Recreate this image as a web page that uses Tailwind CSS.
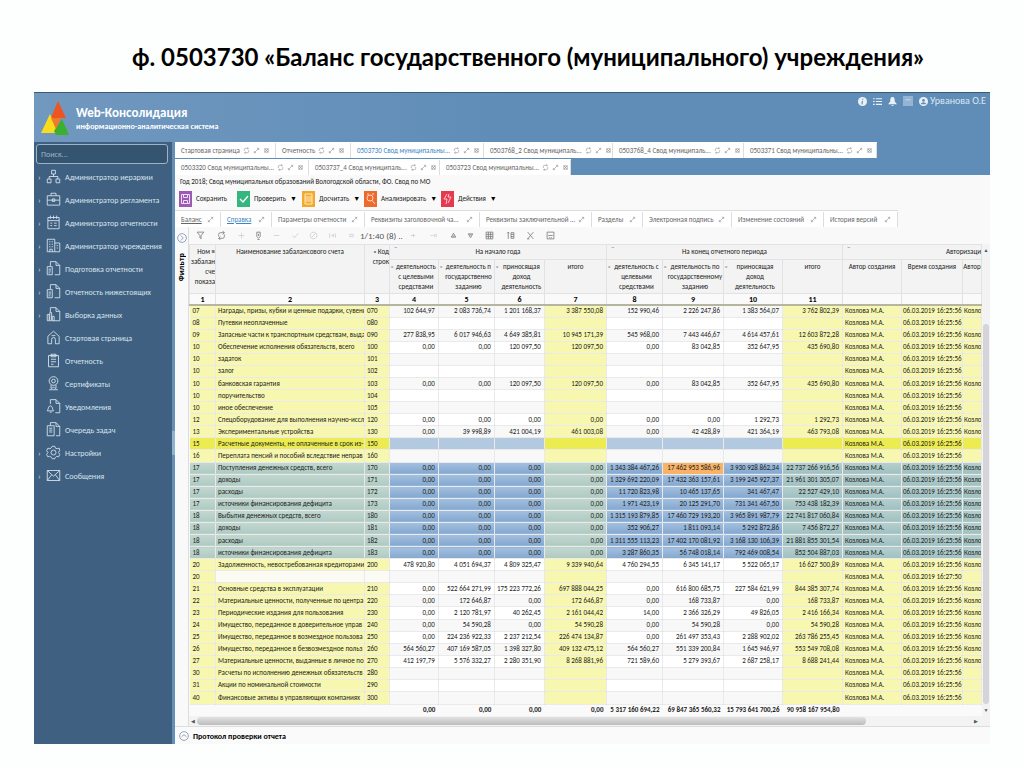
<!DOCTYPE html>
<html lang="ru">
<head>
<meta charset="utf-8">
<title>Web-Консолидация</title>
<script src="https://cdn.jsdelivr.net/npm/@tailwindcss/browser@4"></script>
</head>
<body class="min-h-screen bg-[#fdfefe] font-['Carlito','Calibri','Lato',sans-serif] text-[7px] leading-[10px] text-[#333]">
<svg class="hidden" aria-hidden="true">
  <defs>
    <g id="i-refresh" fill="none" stroke="currentColor" stroke-width="1.3"><path d="M3 9V6a3 3 0 0 1 3-3h6M13 7v3a3 3 0 0 1-3 3H4M10 1l2.500 2L10 5M6 11l-2.500 2L6 15"/></g>
    <g id="i-expand" fill="none" stroke="currentColor" stroke-width="1.3"><path d="M3 13L13 3M9 3h4v4M3 9v4h4"/></g>
    <g id="i-close" fill="none" stroke="currentColor" stroke-width="1.300"><path d="M4 4h8v8H4zM4 4l8 8M12 4l-8 8"/></g>
    <g id="s-tree"><path d="M9 2h6v6H9zM2 16h6v6H2zM16 16h6v6h-6zM12 8v4M5 16v-4h14v4"/></g>
    <g id="s-case"><path d="M2 6h20v15H2zM8 6V2h8v4M2 13h20M10 11h4v4h-4z"/></g>
    <g id="s-cal"><path d="M3 4h18v18H3zM3 9h18M7 1v5M12 1v5M17 1v5M7 13h3M13 13h4M7 17h3M13 17h4"/></g>
    <g id="s-build"><path d="M2 2h12v20H2zM14 8h8v14h-8M5 6h2M9 6h2M5 10h2M9 10h2M5 14h2M9 14h2M6 22v-4h4v4M17 12h2M17 16h2"/></g>
    <g id="s-doc"><path d="M7 8V1h9l6 6v15h-8M16 1v6h6M2 9h8v13H2zM4 13h4M4 16h4M4 19h3"/></g>
    <g id="s-chart"><path d="M7 8V1h9l6 6v15H12M16 1v6h6M2 22V12h3v10zM6 22V9h3v13zM10 22v-7h3v7z"/></g>
    <g id="s-home"><path d="M3 10l9-8 9 8v12h-6v-7a3 3 0 0 0-6 0v7H3zM9 9h6"/></g>
    <g id="s-clip"><path d="M4 4h16v18H4zM8 2h8v4H8zM8 10h8M8 14h8M8 18h4"/></g>
    <g id="s-cert"><circle cx="12" cy="8" r="7"/><circle cx="12" cy="8" r="3"/><path d="M8 14v6l4-2 4 2v-6M5 22h14"/></g>
    <g id="s-bell"><path d="M7 8V1h9l6 6v15h-7M16 1v6h6M2 19c2-2 1-8 5-8s3 6 5 8zM6 21h3"/></g>
    <g id="s-queue"><path d="M7 6V1h9l6 6v15h-6M16 1v6h6M2 6h11v16H2zM5 10h5M5 13h5M5 16h5"/></g>
    <g id="s-gear"><circle cx="12" cy="12" r="4"/><path d="M10 2h4l1 3 3 1 3-1 1 4-2 3 2 3-2 4-3-1-2 2-1 2h-4l-1-2-3-2-3 1-2-4 2-3-2-3 2-4 3 1 2-1z"/></g>
    <g id="s-mail"><path d="M2 4h20v16H2zM2 4l10 9 10-9M2 20l7-9M22 20l-7-9"/></g>
  </defs>
</svg>

<header class="flex h-[92px] items-center justify-center pt-[22px] pl-8">
  <h1 class="font-['Lato','Carlito',sans-serif] text-[24px] leading-[30px] font-bold whitespace-nowrap text-black">ф. 0503730 «Баланс государственного (муниципального) учреждения»</h1>
</header>

<main class="mx-[34px] border-t border-[#3a5a78] bg-[#5f8db7]">
  <div class="flex h-[49px] items-start justify-between bg-linear-to-r from-[#7198bf] via-[#5f8db7] to-[#5f8db7]">
    <div class="flex items-center gap-1 pt-2 pl-1.5 text-white">
      <svg class="h-9 w-8" viewBox="0 0 32 36" aria-hidden="true"><path d="M18 0L11 17h15z" fill="#ee5421"/><path d="M10 13L1 32h17z" fill="#fbdc1c"/><path d="M22 18l-8 12 2 4h13z" fill="#3bb02e"/><path d="M11 17h10l-5 11z" fill="#ee7a2a"/></svg>
      <div>
        <div class="text-[13px] leading-[14px] font-bold">Web-Консолидация</div>
        <div class="text-[8px] leading-3 font-bold">информационно-аналитическая система</div>
      </div>
    </div>
    <div class="flex items-center gap-1.5 pt-0.5 pr-1 text-[#e8f1f8]">
      <svg class="size-[9px]" viewBox="0 0 16 16"><circle cx="8" cy="8" r="8" fill="currentColor"/><path d="M8.500 3v2M8 7l-1 6" stroke="#5f8db7" stroke-width="2"/></svg>
      <svg class="size-[9px]" viewBox="0 0 16 16" stroke="currentColor" stroke-width="2"><path d="M0 3h3M5 3h11M0 8h3M5 8h11M0 13h3M5 13h11"/></svg>
      <svg class="size-[9px]" viewBox="0 0 16 16" fill="currentColor"><path d="M8 0c4 0 4 5 4 8l4 5H0l4-5c0-3 0-8 4-8zM5 14h6l-3 2z"/></svg>
      <svg class="size-[10px]" viewBox="0 0 16 16"><path d="M0 0h16v16H0z" fill="#93b5d3"/><path d="M4 6h8" stroke="#b9d0e4" stroke-width="2"/></svg>
      <div class="flex items-center gap-0.5">
        <svg class="size-[9px]" viewBox="0 0 16 16"><circle cx="8" cy="8" r="8" fill="currentColor"/><circle cx="8" cy="6" r="2.500" fill="#5f8db7"/><path d="M3 13c1-5 9-5 10 0z" fill="#5f8db7"/></svg>
        <a href="#" class="text-[10px] leading-3 text-[#dbe8f3]">Урванова О.Е</a>
      </div>
    </div>
  </div>

  <div class="flex">
    <nav class="w-[138px] shrink-0 bg-[#3f6080] px-0.5 pt-0.5 text-[#d8e4ee]">
      <input type="text" aria-label="Поиск" placeholder="Поиск..." class="mb-px block h-5 w-[132px] rounded-[3px] border border-[#9db4c8] bg-[#34546f] px-1 text-[8px] text-white placeholder:text-[#9db4c8]">
      <ul id="menu"></ul>
    </nav>
    <div class="flex w-[3px] shrink-0 items-center bg-[#6490b8]"><span class="h-6 w-full bg-[#8eb2d2]"></span></div>

    <div class="min-w-0 flex-1">
      <div id="tabs1" class="mb-px flex h-4 w-fit bg-white pt-px"></div>
      <div id="tabs2" class="flex h-4 w-fit bg-white pt-px"></div>

      <div class="bg-[#f9f9f9]">
        <p class="h-[13px] pt-0.5 pl-[5px] text-[#222]">Год 2018; Свод муниципальных образований Вологодской области, ФО. Свод по МО</p>
        <div class="flex h-[22px] items-center pl-1 text-[#222]">
          <button class="flex w-[58px] items-center gap-1"><svg class="h-4 w-[13px] shrink-0" viewBox="0 0 13 16"><path d="M0 0h13v16H0z" fill="#9b5bb5"/><path d="M2.500 3.500h8v9h-8zM4.500 3.500v3h4v-3M4.500 12.500v-3h4v3" fill="none" stroke="#efdcf7"/></svg>Сохранить</button>
          <button class="flex w-[65px] items-center gap-1"><svg class="h-4 w-[13px] shrink-0" viewBox="0 0 13 16"><path d="M0 0h13v16H0z" fill="#35b67f"/><path d="M3 8l3 3 5-6" fill="none" stroke="#fff" stroke-width="1.300"/></svg>Проверить <span class="ml-auto pr-2.5 text-black">▼</span></button>
          <button class="flex w-[62px] items-center gap-1"><svg class="h-4 w-[13px] shrink-0" viewBox="0 0 13 16"><path d="M0 0h13v16H0z" fill="#f2a92c"/><path d="M3 3h7v10H3zM3 6h7M3 8h7M3 10h7" fill="none" stroke="#ffe9bd"/></svg>Досчитать <span class="ml-auto pr-2 text-black">▼</span></button>
          <button class="flex w-[77px] items-center gap-1"><svg class="h-4 w-[13px] shrink-0" viewBox="0 0 13 16"><path d="M0 0h13v16H0z" fill="#ee6a2c"/><circle cx="6" cy="7" r="3" fill="none" stroke="#ffd9c4"/><path d="M8 9.500l3 3.500M3 3h2M8 3h2" stroke="#ffd9c4"/></svg>Анализировать <span class="ml-auto pr-2.5 text-black">▼</span></button>
          <button class="flex w-[62px] items-center gap-1"><svg class="h-4 w-[13px] shrink-0" viewBox="0 0 13 16"><path d="M0 0h13v16H0z" fill="#e53950"/><path d="M6 3L3 8h3l-1 5M7 12l3-6H7l1-3" fill="none" stroke="#ffc5cc"/></svg>Действия <span class="ml-auto pr-2.5 text-black">▼</span></button>
        </div>
        <div id="sheets" class="flex h-[17px] w-fit border-t border-[#ddd] bg-white pt-px text-[#666]"></div>

        <div class="flex">
          <aside class="flex w-[14px] shrink-0 flex-col items-center border-r border-[#ddd] pt-1.5">
            <button aria-label="Развернуть фильтр"><svg class="size-[10px]" viewBox="0 0 16 16" fill="none" stroke="#7d93b0" stroke-width="1.300"><circle cx="8" cy="8" r="7"/><path d="M6 4l4 4-4 4"/></svg></button>
            <span class="mt-2.5 rotate-180 font-['Open_Sans',sans-serif] text-[7px] font-bold text-black [writing-mode:vertical-rl]">Фильтр</span>
          </aside>
          <div class="min-w-0 flex-1">
            <div class="flex h-[17px] items-center pl-0.5 text-[#777]" id="tools"></div>
            <div class="flex">
              <div class="min-w-0 flex-1 overflow-hidden">
              <table class="h-[472px] w-full table-fixed border-collapse">
                <colgroup><col class="w-[26px]"><col><col class="w-[25px]"><col class="w-[49px]"><col class="w-[56px]"><col class="w-[50px]"><col class="w-[62px]"><col class="w-[56px]"><col class="w-[61px]"><col class="w-[59px]"><col class="w-[60px]"><col class="w-[59px]"><col class="w-[61px]"><col class="w-[19px]"></colgroup>
                <thead class="bg-[#f3f3f3] text-[#222]">
                  <tr class="h-[15px]">
                    <th rowspan="2" class="overflow-hidden border border-[#e2e2e2] pt-0.5 text-right align-top font-normal whitespace-nowrap">Ном ≡<br>забалан<br>сче<br>показа</th>
                    <th rowspan="2" class="border border-[#e2e2e2] pt-0.5 align-top font-normal">Наименование забалансового счета</th>
                    <th rowspan="2" class="border border-[#e2e2e2] pt-0.5 text-right align-top font-normal whitespace-nowrap">▫ Код<br>строк</th>
                    <th colspan="4" class="relative border border-[#e2e2e2] font-normal before:absolute before:-top-0.5 before:left-1 before:text-[#888] before:content-['–']">На начало года</th>
                    <th colspan="4" class="relative border border-[#e2e2e2] font-normal before:absolute before:-top-0.5 before:left-1 before:text-[#888] before:content-['–']">На конец отчетного периода</th>
                    <th colspan="3" class="relative border border-[#e2e2e2] text-right font-normal before:absolute before:-top-0.5 before:left-1 before:text-[#888] before:content-['–']">Авторизаци</th>
                  </tr>
                  <tr class="h-[34px] align-top whitespace-nowrap">
                    <th class="relative overflow-hidden border border-[#e2e2e2] pt-0.5 pl-1 font-normal before:absolute before:left-px before:text-[#888] before:content-['▫']">деятельность<br>с целевыми<br>средствами</th>
                    <th class="relative overflow-hidden border border-[#e2e2e2] pt-0.5 pl-1 font-normal before:absolute before:left-px before:text-[#888] before:content-['▫']">деятельность п<br>государственно<br>заданию</th>
                    <th class="relative overflow-hidden border border-[#e2e2e2] pt-0.5 pl-1 font-normal before:absolute before:left-px before:text-[#888] before:content-['▫']">приносящая<br>доход<br>деятельность</th>
                    <th class="border border-[#e2e2e2] pt-0.5 font-normal">итого</th>
                    <th class="relative overflow-hidden border border-[#e2e2e2] pt-0.5 pl-1 font-normal before:absolute before:left-px before:text-[#888] before:content-['▫']">деятельность с<br>целевыми<br>средствами</th>
                    <th class="relative overflow-hidden border border-[#e2e2e2] pt-0.5 pl-1 font-normal before:absolute before:left-px before:text-[#888] before:content-['▫']">деятельность по<br>государственному<br>заданию</th>
                    <th class="relative overflow-hidden border border-[#e2e2e2] pt-0.5 pl-1 font-normal before:absolute before:left-px before:text-[#888] before:content-['▫']">приносящая<br>доход<br>деятельность</th>
                    <th class="border border-[#e2e2e2] pt-0.5 font-normal">итого</th>
                    <th class="border border-[#e2e2e2] pt-0.5 font-normal">Автор создания</th>
                    <th class="border border-[#e2e2e2] pt-0.5 font-normal">Время создания</th>
                    <th class="overflow-hidden border border-[#e2e2e2] pt-0.5 font-normal">Автор</th>
                  </tr>
                  <tr class="h-[11px] border-b-2 border-b-[#b5b5a0] text-black" id="nums"></tr>
                </thead>
                <tbody id="rows" class="text-[#222]"></tbody>
                <tfoot><tr class="h-3 border-t border-[#aaa] bg-[#fafafa] text-right text-[#222]" id="total"></tr></tfoot>
              </table>
              </div>
              <div class="flex w-2 shrink-0 flex-col items-center justify-between bg-[#f3f3f3] text-[5px] leading-3 text-[#555]">
                <span>▲</span>
                <span class="mt-[68px] w-1.5 flex-1 rounded-sm bg-[#d5d5d9]"></span>
                <span>▼</span>
              </div>
            </div>
            <div class="flex h-[10px] items-center bg-[#f3f3f3] pr-3 text-[5px] text-[#555]">
              <span class="w-2 text-center">◀</span>
              <span class="h-2 w-[669px] rounded-sm bg-linear-to-b from-[#e2e2e2] to-[#bcbcbc]"></span>
              <span class="ml-auto">▶</span>
            </div>
          </div>
        </div>
        <div class="flex h-[18px] items-center gap-1 border-t border-[#ddd] bg-[#fafafa] pl-1 text-black">
          <button aria-label="Развернуть протокол"><svg class="block size-[10px]" viewBox="0 0 16 16" fill="none" stroke="#7d93b0" stroke-width="1.300"><circle cx="8" cy="8" r="7"/><path d="M4 9l4-3 4 3"/></svg></button>
          <span class="text-[8px] font-bold">Протокол проверки отчета</span>
        </div>
      </div>
    </div>
  </div>
</main>

<script>
const el = id => document.getElementById(id);

el('menu').innerHTML = [
  ['tree','Администратор иерархии',1],['case','Администратор регламента',1],['cal','Администратор отчетности',1],
  ['build','Администратор учреждения',1],['doc','Подготовка отчетности',1],['doc','Отчетность нижестоящих',1],
  ['chart','Выборка данных',1],['home','Стартовая страница',0],['clip','Отчетность',0],['cert','Сертификаты',0],
  ['bell','Уведомления',0],['queue','Очередь задач',0],['gear','Настройки',1],['mail','Сообщения',1]
].map(([i,t,a]) => `<li><a href="#" class="flex h-[23px] items-center text-[8px] whitespace-nowrap"><span class="w-[10px] shrink-0 pl-0.5">${a ? '›' : ''}</span><svg class="mr-1 size-[15px] shrink-0" viewBox="0 0 24 24" fill="none" stroke="currentColor" stroke-width="1.4"><use href="#s-${i}"/></svg>${t}</a></li>`).join('');

const ico = n => `<svg class="size-[7px] shrink-0 text-[#888]" viewBox="0 0 16 16"><use href="#i-${n}"/></svg>`;
const tab = ([t,w,c]) => `<div class="flex items-center gap-[3px] border-r border-[#ddd] pr-2 pl-1.5 whitespace-nowrap ${c || 'text-[#666]'}" style="width:${w}px"><a href="#" class="mr-auto">${t}</a>${ico('refresh')}${ico('expand')}${ico('close')}</div>`;
el('tabs1').innerHTML = [['Стартовая страница',101],['Отчетность',75],['0503730 Свод муниципальны...',133,'text-[#3b86c4]'],['0503768_2 Свод муниципаль...',129],['0503768_4 Свод муниципаль...',131],['0503371 Свод муниципальны...',133]].map(tab).join('');
el('tabs2').innerHTML = [['0503320 Свод муниципальны...',134],['0503737_4 Свод муниципаль...',131],['0503723 Свод муниципальны...',131]].map(tab).join('');
el('sheets').innerHTML = [['Баланс',46,'underline'],['Справка',51,'text-[#3b86c4] underline'],['Параметры отчетности',93,''],['Реквизиты заголовочной ча...',115,''],['Реквизиты заключительной ...',112,''],['Разделы',51,''],['Электронная подпись',89,''],['Изменение состояний',92,''],['История версий',74,'']]
  .map(([t,w,c]) => `<div class="flex items-center border-r border-[#ddd] px-1.5 whitespace-nowrap" style="width:${w}px"><a href="#" class="mr-auto ${c}">${t}</a>${ico('expand')}</div>`).join('');

const T = (w, d, c) => `<button class="flex h-3 shrink-0 items-center justify-center ${c || ''}" aria-label="Действие" style="width:${w}px"><svg class="size-[9px]" viewBox="0 0 16 16" fill="none" stroke="currentColor" stroke-width="1.4"><path d="${d}"/></svg></button>`;
const dim = 'text-[#ccc]';
el('tools').innerHTML =
  T(18,'M2 2h12L9 8v6l-2-2V8z') + T(24,'M3 10V6a3 3 0 0 1 3-3h7M13 6v4a3 3 0 0 1-3 3H3M10 0l3 3-3 3M6 10l-3 3 3 3') + T(17,'M8 3v10M3 8h10',dim) +
  T(16,'M5 2h6v8l-3 3-3-3zM8 5v4M6 15h4') + T(20,'M3 8h10',dim) + T(18,'M3 8l3 4 7-8',dim) + T(18,'M8 2a6 6 0 1 0 .1 0M4 12l8-8',dim) +
  T(20,'M3 4v8M13 4v8M6 8h5M9 5v6',dim) + T(18,'M5 6h6v4H5z',dim) +
  `<span class="w-[44px] shrink-0 text-[9px] whitespace-nowrap text-[#555]">1/1:40 (8) ..</span>` +
  T(18,'M3 8h8M8 5v6',dim) + T(22,'M3 8h5M10 5v6M13 5v6',dim) + T(18,'M4 11h8L8 4zM6 9h4') + T(16,'M4 5h8L8 12zM6 7h4') +
  T(22,'M2 2h12v12H2zM2 6h12M2 10h12M6 2v12M10 2v12') + T(20,'M4 14V2M2 4l2-2 2 2M9 3h5v10H9zM9 6h5M9 10h5') + T(20,'M3 2l10 12M13 2L3 14M2 14h4') + T(20,'M2 2h12v12H2zM4 8h8M6 11l2 2 2-2');

el('nums').innerHTML = [1,2,3,4,5,6,7,8,9,10,11,'','',''].map(n => `<th class="border-x border-[#e2e2e2] bg-[#fafafa] p-0 text-[8px] font-bold">${n}</th>`).join('');

const data = `07|Награды, призы, кубки и ценные подарки, сувени|070|102 644,97|2 083 736,74|1 201 168,37|3 387 550,08|152 990,46|2 226 247,86|1 383 564,07|3 762 802,39
08|Путевки неоплаченные|080
09|Запасные части к транспортным средствам, выда|090|277 838,95|6 017 946,63|4 649 385,81|10 945 171,39|545 968,00|7 443 446,67|4 614 457,61|12 603 872,28
10|Обеспечение исполнения обязательств, всего|100|0,00|0,00|120 097,50|120 097,50|0,00|83 042,85|352 647,95|435 690,80
10|задаток|101
10|залог|102
10|банковская гарантия|103|0,00|0,00|120 097,50|120 097,50|0,00|83 042,85|352 647,95|435 690,80
10|поручительство|104
10|иное обеспечение|105
12|Спецоборудование для выполнения научно-иссл|120|0,00|0,00|0,00|0,00|0,00|0,00|1 292,73|1 292,73
13|Экспериментальные устройства|130|0,00|39 998,89|421 004,19|461 003,08|0,00|42 428,89|421 364,19|463 793,08
15|Расчетные документы, не оплаченные в срок из-|150
16|Переплата пенсий и пособий вследствие неправ|160
17|Поступления денежных средств, всего|170|0,00|0,00|0,00|0,00|1 343 384 467,26|17 462 953 586,96|3 930 928 862,34|22 737 266 916,56
17|доходы|171|0,00|0,00|0,00|0,00|1 329 692 220,09|17 432 363 157,61|3 199 245 927,37|21 961 301 305,07
17|расходы|172|0,00|0,00|0,00|0,00|11 720 823,98|10 465 137,65|341 467,47|22 527 429,10
17|источники финансирования дефицита|173|0,00|0,00|0,00|0,00|1 971 423,19|20 125 291,70|731 341 467,50|753 438 182,39
18|Выбытия денежных средств, всего|180|0,00|0,00|0,00|0,00|1 315 193 879,85|17 460 729 193,20|3 965 891 987,79|22 741 817 060,84
18|доходы|181|0,00|0,00|0,00|0,00|352 906,27|1 811 093,14|5 292 872,86|7 456 872,27
18|расходы|182|0,00|0,00|0,00|0,00|1 311 555 113,23|17 402 170 081,92|3 168 130 106,39|21 881 855 301,54
18|источники финансирования дефицита|183|0,00|0,00|0,00|0,00|3 287 860,35|56 748 018,14|792 469 008,54|852 504 887,03
20|Задолженность, невостребованная кредиторами|200|478 920,80|4 051 694,37|4 809 325,47|9 339 940,64|4 760 294,55|6 345 141,17|5 522 065,17|16 627 500,89
20||
21|Основные средства  в эксплуатации|210|0,00|522 664 271,99|175 223 772,26|697 888 044,25|0,00|616 800 685,75|227 584 621,99|844 385 307,74
22|Материальные ценности, полученные по центра|220|0,00|172 646,87|0,00|172 646,87|0,00|168 733,87|0,00|168 733,87
23|Периодические издания для пользования|230|0,00|2 120 781,97|40 262,45|2 161 044,42|14,00|2 366 326,29|49 826,05|2 416 166,34
24|Имущество, переданное в доверительное управ|240|0,00|54 590,28|0,00|54 590,28|0,00|54 590,28|0,00|54 590,28
25|Имущество, переданное в возмездное пользова|250|0,00|224 236 922,33|2 237 212,54|226 474 134,87|0,00|261 497 353,43|2 288 902,02|263 786 255,45
26|Имущество, переданное в безвозмездное польз|260|564 560,27|407 169 587,05|1 398 327,80|409 132 475,12|564 560,27|551 339 200,84|1 645 946,97|553 549 708,08
27|Материальные ценности, выданные в личное по.|270|412 197,79|5 576 332,27|2 280 351,90|8 268 881,96|721 589,60|5 279 393,67|2 687 258,17|8 688 241,44
30|Расчеты по исполнению денежных обязательств|280
31|Акции по номинальной стоимости|290
40|Финансовые активы в управляющих компаниях|300`.split('\n').map(r => r.split('|'));

el('rows').innerHTML = data.map((r, i) => {
  const stripe = i % 2 ? 'bg-white' : 'bg-[#f8f8f8]';
  const sel = i >= 13 && i <= 20;
  const cells = Array.from({length: 14}, (_, c) => {
    const key = c < 3 || c === 6 || c > 9;
    let bg = key ? 'bg-[#f7f7b0]' : stripe;
    if (i === 11) bg = key ? 'bg-[#ecec50]' : 'bg-[#b3c9e0]';
    if (sel) bg = key ? (c === 6 || c < 3 ? 'bg-linear-to-b from-[#c3d8cf] to-[#aecac3]' : 'bg-linear-to-b from-[#b5cfcd] to-[#9fc0c2]') : 'bg-linear-to-b from-[#a3c0e0] to-[#84a8d0]';
    if (i === 13 && c === 8) bg = 'bg-[#f9b367]';
    if (i === 22 && (c === 1 || c === 2)) bg = 'bg-[#fbfbf4]';
    const v = c === 11 ? 'Козлова М.А.' : c === 12 ? (i === 22 ? '06.03.2019 16:27:50' : '06.03.2019 16:25:56') : c === 13 ? (r[3] ? 'Козло' : '') : (r[c] || '');
    const al = c > 2 && c < 11 ? 'pr-[3px] text-right' : c > 11 ? 'pr-0 pl-px' : c === 0 ? 'pl-[3px]' : 'pr-0 pl-0.5';
    return `<td class="overflow-hidden border-r border-b border-black/6 py-0 ${al} whitespace-nowrap ${bg}">${v}</td>`;
  }).join('');
  return `<tr class="h-3">${cells}</tr>`;
}).join('');

el('total').innerHTML = ['','','','0,00','0,00','0,00','0,00','5 317 160 694,22','69 847 365 560,32','15 793 641 700,26','90 958 167 954,80','','','']
  .map(v => `<td class="py-0 pr-[3px] font-bold whitespace-nowrap">${v}</td>`).join('');
</script>
</body>
</html>
